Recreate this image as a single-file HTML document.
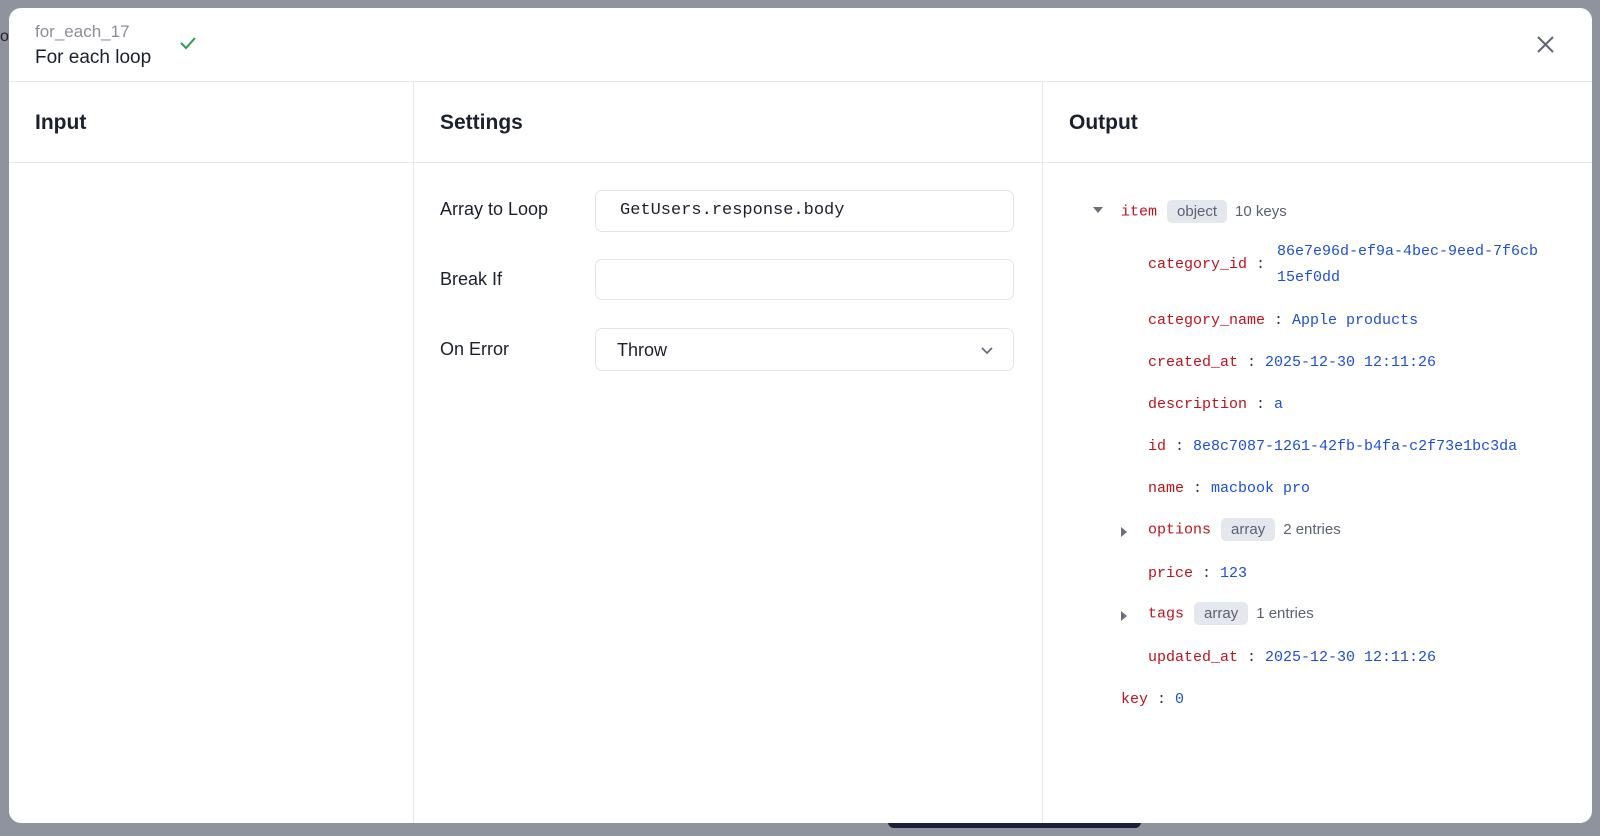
<!DOCTYPE html>
<html><head><meta charset="utf-8"><style>
*{box-sizing:border-box;margin:0;padding:0}
body{width:1600px;height:836px;background:#8f939d;position:relative;overflow:hidden;font-family:"Liberation Sans",sans-serif;color:#1b1f2e}
.a{position:absolute;white-space:nowrap}
.modal{position:absolute;left:9px;top:8px;width:1583px;height:815px;background:#fff;border-radius:12px;overflow:hidden}
.m{font-family:"Liberation Mono",monospace;font-size:15px}
.k{color:#c0121c}.v{color:#1d4fd8}.c{color:#333}
.badge{display:inline-block;vertical-align:middle;background:#e4e7ee;color:#5b6172;border-radius:5px;padding:3px 10px;font-family:"Liberation Sans",sans-serif;font-size:15px;margin:0 8px 0 10px}
.cnt{vertical-align:middle;font-family:"Liberation Sans",sans-serif;font-size:15px;color:#5b6172}
.inp{position:absolute;left:595px;width:419px;border:1px solid #e2e4ea;border-radius:7px;background:#fff}
.lbl{font-size:18px;color:#1b1f2e}
.h{font-size:21px;font-weight:bold;color:#1b1f2e}
.tri{position:absolute;width:0;height:0}
</style></head><body>
<div class="a" style="left:0;top:28px;font-size:16px;color:#222">o</div>
<div class="a" style="left:888px;top:818px;width:253px;height:10px;background:#1b1f3a;border-radius:0 0 6px 6px"></div>
<div class="modal"></div>
<div class="a" style="left:35px;top:22px;font-size:17px;color:#8a8f9c">for_each_17</div>
<div class="a" style="left:35px;top:47px;font-size:19px;color:#1b1f2e">For each loop</div>
<svg class="a" style="left:179px;top:36px" width="18" height="14" viewBox="0 0 18 14"><path d="M2 7 L7 12 L16 2" fill="none" stroke="#2e9e4e" stroke-width="2"/></svg>
<svg class="a" style="left:1537px;top:36px" width="17" height="17" viewBox="0 0 17 17"><path d="M1 1 L16 16 M16 1 L1 16" stroke="#5f6577" stroke-width="2"/></svg>
<div class="a" style="left:9px;top:81px;width:1583px;height:1px;background:#e6e8ed"></div>
<div class="a" style="left:9px;top:162px;width:1583px;height:1px;background:#e6e8ed"></div>
<div class="a" style="left:413px;top:82px;width:1px;height:741px;background:#e6e8ed"></div>
<div class="a" style="left:1042px;top:82px;width:1px;height:741px;background:#e6e8ed"></div>
<div class="a h" style="left:35px;top:111px">Input</div>
<div class="a h" style="left:440px;top:111px">Settings</div>
<div class="a h" style="left:1069px;top:111px">Output</div>

<div class="a lbl" style="left:440px;top:199px">Array to Loop</div>
<div class="inp" style="top:190px;height:42px"><span class="a m" style="left:24px;top:10px;font-size:17px;color:#1b1f2e">GetUsers.response.body</span></div>
<div class="a lbl" style="left:440px;top:269px">Break If</div>
<div class="inp" style="top:259px;height:41px"></div>
<div class="a lbl" style="left:440px;top:339px">On Error</div>
<div class="inp" style="top:328px;height:43px"><span class="a" style="left:21px;top:11px;font-size:18px">Throw</span>
<svg class="a" style="left:384px;top:17px" width="14" height="9" viewBox="0 0 14 9"><path d="M2 2 L7 7 L12 2" fill="none" stroke="#5f6577" stroke-width="1.6"/></svg></div>

<div class="tri" style="left:1093px;top:207px;border-left:5px solid transparent;border-right:5px solid transparent;border-top:6px solid #6a6f7c"></div>
<div class="a m" style="left:1121px;top:200px"><span class="k">item</span><span class="badge">object</span><span class="cnt">10 keys</span></div>
<div class="a m" style="left:1148px;top:256px"><span class="k">category_id</span><span class="c"> : </span></div>
<div class="a m v" style="left:1277px;top:243px">86e7e96d-ef9a-4bec-9eed-7f6cb</div>
<div class="a m v" style="left:1277px;top:269px">15ef0dd</div>
<div class="a m" style="left:1148px;top:312px"><span class="k">category_name</span><span class="c"> : </span><span class="v">Apple products</span></div>
<div class="a m" style="left:1148px;top:354px"><span class="k">created_at</span><span class="c"> : </span><span class="v">2025-12-30 12:11:26</span></div>
<div class="a m" style="left:1148px;top:396px"><span class="k">description</span><span class="c"> : </span><span class="v">a</span></div>
<div class="a m" style="left:1148px;top:438px"><span class="k">id</span><span class="c"> : </span><span class="v">8e8c7087-1261-42fb-b4fa-c2f73e1bc3da</span></div>
<div class="a m" style="left:1148px;top:480px"><span class="k">name</span><span class="c"> : </span><span class="v">macbook pro</span></div>
<div class="tri" style="left:1121px;top:527px;border-top:5px solid transparent;border-bottom:5px solid transparent;border-left:6px solid #6a6f7c"></div>
<div class="a m" style="left:1148px;top:518px"><span class="k">options</span><span class="badge">array</span><span class="cnt">2 entries</span></div>
<div class="a m" style="left:1148px;top:565px"><span class="k">price</span><span class="c"> : </span><span class="v">123</span></div>
<div class="tri" style="left:1121px;top:611px;border-top:5px solid transparent;border-bottom:5px solid transparent;border-left:6px solid #6a6f7c"></div>
<div class="a m" style="left:1148px;top:602px"><span class="k">tags</span><span class="badge">array</span><span class="cnt">1 entries</span></div>
<div class="a m" style="left:1148px;top:649px"><span class="k">updated_at</span><span class="c"> : </span><span class="v">2025-12-30 12:11:26</span></div>
<div class="a m" style="left:1121px;top:691px"><span class="k">key</span><span class="c"> : </span><span class="v">0</span></div>
</body></html>
